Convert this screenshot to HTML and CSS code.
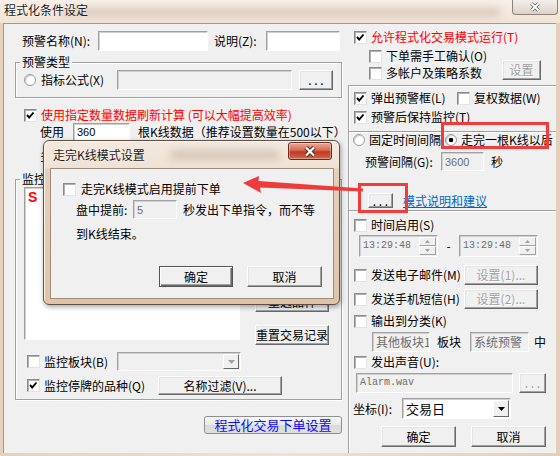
FILE: index.html
```html
<!DOCTYPE html>
<html>
<head>
	<meta charset="utf-8">
	<title>程式化条件设定</title>
	<link rel="stylesheet" href="styles.css">
</head>
<body>
<div class="win">
	<div class="titlebar">
		<span class="title">程式化条件设定</span>
		<span class="haze"></span>
		<div class="wclose">
			<svg width="12" height="10" viewBox="0 0 12 10"><path d="M2.5 1.5l7 7M9.5 1.5l-7 7" stroke="#706862" stroke-width="3.6"/><path d="M2.5 1.5l7 7M9.5 1.5l-7 7" stroke="#fff" stroke-width="1.8"/></svg>
		</div>
	</div>

	<div class="client">
		<!-- left column -->
		<div class="lcol">
			<div class="row h20">
				<span class="lbl ml19 w76">预警名称(N):</span>
				<span class="tb w110"></span>
				<span class="lbl ml6 w52">说明(Z):</span>
				<span class="tb w74"></span>
			</div>

			<fieldset class="gb gb-type">
				<legend>预警类型</legend>
				<div class="row h20 mt1">
					<span class="rd ml8"></span>
					<span class="lbl ml5 w76">指标公式(X)</span>
					<span class="tb dis w175"></span>
					<span class="btn ml7 w34">. . .</span>
				</div>
			</fieldset>

			<div class="row h14 mt10">
				<span class="cb ml21"><svg width="11" height="11" viewBox="0 0 11 11"><polyline points="2,5 4.2,7.5 8.5,2.5" fill="none" stroke="#000" stroke-width="1.9"/></svg></span>
				<span class="lbl ml4 red">使用指定数量数据刷新计算 (可以大幅提高效率)</span>
			</div>
			<div class="row h18 mt1">
				<span class="lbl ml37 w33">使用</span>
				<span class="tb num w57">360</span>
				<span class="lbl ml8">根K线数据（推荐设置数量在500以下）</span>
			</div>
			<div class="row h14 mt8">
				<span class="lbl ml37">多</span>
			</div>

			<fieldset class="gb gb-mon">
				<legend>监控品种</legend>
				<div class="row mon-body">
					<div class="lst"><b class="s">S</b></div>
					<div class="side-btns">
						<span class="btn w74">重选品种</span>
						<span class="btn w74">重置交易记录</span>
					</div>
				</div>
				<div class="row h19 mt7">
					<span class="cb ml11"></span>
					<span class="lbl ml4 w73">监控板块(B)</span>
					<span class="combo dis w124"><span class="cbtn"><svg width="7" height="4" viewBox="0 0 7 4"><path d="M0 0h7L3.5 4z" fill="#a0a0a0"/></svg></span></span>
				</div>
				<div class="row h19 mt5">
					<span class="cb ml11"><svg width="11" height="11" viewBox="0 0 11 11"><polyline points="2,5 4.2,7.5 8.5,2.5" fill="none" stroke="#000" stroke-width="1.9"/></svg></span>
					<span class="lbl ml4 w114">监控停牌的品种(Q)</span>
					<span class="btn w124 h19">名称过滤(V)...</span>
				</div>
			</fieldset>

			<span class="btn-theme">程式化交易下单设置</span>
		</div>

		<!-- right column -->
		<div class="rcol">
			<div class="row h14">
				<span class="cb ml6"><svg width="11" height="11" viewBox="0 0 11 11"><polyline points="2,5 4.2,7.5 8.5,2.5" fill="none" stroke="#000" stroke-width="1.9"/></svg></span>
				<span class="lbl ml4 red">允许程式化交易模式运行(T)</span>
			</div>
			<div class="bc mt5">
				<div>
					<div class="row h14">
						<span class="cb ml21"></span>
						<span class="lbl ml4">下单需手工确认(O)</span>
					</div>
					<div class="row h14 mt3">
						<span class="cb ml21"></span>
						<span class="lbl ml4">多帐户及策略系数</span>
					</div>
				</div>
				<span class="btn dis w39 bc-btn">设置</span>
			</div>

			<div class="rpanel">
				<div class="row h14 mt5">
					<span class="cb ml5"><svg width="11" height="11" viewBox="0 0 11 11"><polyline points="2,5 4.2,7.5 8.5,2.5" fill="none" stroke="#000" stroke-width="1.9"/></svg></span>
					<span class="lbl ml4 w86">弹出预警框(L)</span>
					<span class="cb"></span>
					<span class="lbl ml4">复权数据(W)</span>
				</div>
				<div class="row h14 mt5">
					<span class="cb ml5"><svg width="11" height="11" viewBox="0 0 11 11"><polyline points="2,5 4.2,7.5 8.5,2.5" fill="none" stroke="#000" stroke-width="1.9"/></svg></span>
					<span class="lbl ml4">预警后保持监控(T)</span>
				</div>
				<div class="sep mt7"></div>
				<div class="row h14">
					<span class="rd ml4"></span>
					<span class="lbl ml4 w76">固定时间间隔</span>
					<span class="rd on"></span>
					<span class="lbl ml4">走完一根K线以后</span>
				</div>
				<div class="row h19 mt5">
					<span class="lbl ml16 w76">预警间隔(G):</span>
					<span class="tb dis num w43">3600</span>
					<span class="lbl ml7">秒</span>
				</div>
				<div class="row h15 mt22">
					<span class="btn ml19 w25 h15">. . .</span>
					<span class="link ml10">模式说明和建议</span>
				</div>
				<div class="sep mt2"></div>
				<div class="row h14 mt6">
					<span class="cb ml5"></span>
					<span class="lbl ml4">时间启用(S)</span>
				</div>
				<div class="row h22 mt3">
					<span class="picker ml10"><span class="ptext">13:29:48</span><span class="spin"><span><svg width="5" height="3" viewBox="0 0 5 3"><path d="M2.5 0L5 3H0z" fill="#a0a0a0"/></svg></span><span><svg width="5" height="3" viewBox="0 0 5 3"><path d="M0 0h5L2.5 3z" fill="#a0a0a0"/></svg></span></span></span>
					<span class="dash">-</span>
					<span class="picker"><span class="ptext">13:29:48</span><span class="spin"><span><svg width="5" height="3" viewBox="0 0 5 3"><path d="M2.5 0L5 3H0z" fill="#a0a0a0"/></svg></span><span><svg width="5" height="3" viewBox="0 0 5 3"><path d="M0 0h5L2.5 3z" fill="#a0a0a0"/></svg></span></span></span>
				</div>
				<div class="row h20 mt8">
					<span class="cb ml5"></span>
					<span class="lbl ml4 w93">发送电子邮件(M)</span>
					<span class="btn dis w74">设置(1)...</span>
				</div>
				<div class="row h20 mt4">
					<span class="cb ml5"></span>
					<span class="lbl ml4 w93">发送手机短信(H)</span>
					<span class="btn dis w74">设置(2)...</span>
				</div>
				<div class="row h14 mt5">
					<span class="cb ml5"></span>
					<span class="lbl ml4">输出到分类(K)</span>
				</div>
				<div class="row h20 mt4">
					<span class="tb dis ml23 w58">其他板块1</span>
					<span class="lbl ml7 w33">板块</span>
					<span class="tb dis w59">系统预警</span>
					<span class="lbl ml5">中</span>
				</div>
				<div class="row h14 mt3">
					<span class="cb ml5"></span>
					<span class="lbl ml4">发出声音(U):</span>
				</div>
				<div class="row h20 mt4">
					<span class="tb dis mono ml7 w157">Alarm.wav</span>
					<span class="btn dis ml6 w27">. . .</span>
				</div>
				<div class="row h21 mt5">
					<span class="lbl ml4 w49">坐标(I):</span>
					<span class="combo w109"><span class="ctext">交易日</span><span class="cbtn"><svg width="7" height="4" viewBox="0 0 7 4"><path d="M0 0h7L3.5 4z" fill="#000"/></svg></span></span>
				</div>
				<div class="row h21 mt7">
					<span class="btn ml32 w75">确定</span>
					<span class="btn ml15 w75">取消</span>
				</div>
			</div>
		</div>
	</div>

	<!-- sub dialog on top -->
	<div class="sd">
		<div class="sd-title">
			<span class="sd-text">走完K线模式设置</span>
			<span class="haze2"></span>
			<div class="sd-close">
				<svg width="14" height="11" viewBox="0 0 14 11"><path d="M3 1.5l8 8M11 1.5l-8 8" stroke="#5a2a22" stroke-width="4.2"/><path d="M3 1.5l8 8M11 1.5l-8 8" stroke="#fff" stroke-width="2.2"/></svg>
			</div>
		</div>
		<div class="sd-body">
			<div class="row h14 mt13">
				<span class="cb ml12"></span>
				<span class="lbl ml5">走完K线模式启用提前下单</span>
			</div>
			<div class="row h19 mt4">
				<span class="lbl ml25 w57">盘中提前:</span>
				<span class="tb dis num w44">5</span>
				<span class="lbl ml6">秒发出下单指令，而不等</span>
			</div>
			<div class="row h14 mt8">
				<span class="lbl ml25">到K线结束。</span>
			</div>
			<div class="row h21 mt25">
				<span class="btn def ml108 w74">确定</span>
				<span class="btn ml14 w75">取消</span>
			</div>
		</div>
	</div>

	<!-- annotations -->
	<div class="mark mark-a"></div>
	<div class="mark mark-b"></div>
	<svg class="arrow" width="560" height="456" viewBox="0 0 560 456">
		<polygon points="243,183 259,176 258.5,181 363,188.5 363,191.5 260,187.5 261,193" fill="#ee3b3b"/>
	</svg>
</div>
</body>
</html>
```

FILE: styles.css
```css
* {
	box-sizing: border-box;
}

body {
	margin: 0;
	background: #e8d6c4;
	font-family: "Noto Sans CJK SC", "DejaVu Sans", sans-serif;
	font-size: 12px;
	line-height: 14px;
	color: #000;
}

.win {
	position: relative;
	width: 560px;
	height: 456px;
	overflow: hidden;
	background: linear-gradient(90deg, #e6d1bc, #efe1d3 50%, #e4cfba);
}

/* title bar */
.titlebar {
	position: relative;
	height: 23px;
	display: flex;
	justify-content: space-between;
	align-items: flex-start;
	background: linear-gradient(#f8efe6, #f1e3d6);
	overflow: hidden;
}

.title {
	position: relative;
	z-index: 1;
	margin: 3px 0 0 4px;
	color: #1b1b1b;
	text-shadow: 0 0 3px #fff;
}

.haze {
	position: absolute;
	left: 60px;
	right: 60px;
	top: 9px;
	height: 6px;
	background: #9c8574;
	filter: blur(4px);
	opacity: .45;
}

.wclose {
	position: relative;
	z-index: 1;
	width: 46px;
	height: 15px;
	margin-right: 2px;
	border: 1px solid #8c817a;
	border-top: none;
	border-radius: 0 0 4px 4px;
	background: linear-gradient(#f5eee9, #ddd2ca);
	display: flex;
	justify-content: center;
	align-items: center;
}

/* client area */
.client {
	display: flex;
	height: 430px;
	margin: 0 4px 0 3px;
	background: #f0f0f0;
	box-shadow: inset 1px 1px 0 #a8988a;
}

.lcol {
	width: 345px;
	padding-top: 8px;
}

.rcol {
	flex: 1;
	padding-top: 7px;
	overflow: hidden;
}

.row {
	display: flex;
	align-items: center;
}

.lbl {
	flex: none;
	white-space: nowrap;
}

.red {
	color: #f00;
}

.link {
	color: #0066cc;
	text-decoration: underline;
	white-space: nowrap;
}

/* controls */
.tb {
	flex: none;
	display: flex;
	align-items: center;
	height: 100%;
	padding: 0 3px;
	background: #fff;
	border: 1px solid;
	border-color: #a0a0a0 #fff #fff #a0a0a0;
	box-shadow: inset 1px 1px 0 #d0d0d0;
	white-space: nowrap;
	overflow: hidden;
}

.tb.dis {
	background: #f0f0f0;
	color: #6d6d6d;
}

.num {
	font-family: "Liberation Sans", sans-serif;
	font-size: 11px;
}

.mono {
	font-family: "Liberation Mono", monospace;
	font-size: 10px;
}

.btn {
	flex: none;
	display: flex;
	align-items: center;
	justify-content: center;
	height: 100%;
	background: #f0f0f0;
	border: 1px solid;
	border-color: #fff #696969 #696969 #fff;
	box-shadow: inset -1px -1px 0 #a0a0a0, inset 1px 1px 0 #e3e3e3;
	white-space: nowrap;
}

.btn.dis {
	color: #a0a0a0;
	text-shadow: 1px 1px 0 #fff;
}

.btn.def {
	border-color: #555;
	box-shadow: inset 1px 1px 0 #fff, inset -1px -1px 0 #696969, inset -2px -2px 0 #a0a0a0;
}

.btn-theme {
	display: flex;
	align-items: center;
	justify-content: center;
	width: 138px;
	height: 18px;
	margin: 16px 0 0 201px;
	border: 1px solid #8e8f8f;
	border-radius: 3px;
	background: linear-gradient(#f8f8f8, #e8e8e8 50%, #d9d9d9 51%, #e0e0e0);
	color: #0a0aff;
	font-size: 13px;
}

.cb {
	flex: none;
	display: flex;
	width: 13px;
	height: 13px;
	background: #fff;
	border: 1px solid;
	border-color: #8a8a8a #e3e3e3 #e3e3e3 #8a8a8a;
	box-shadow: inset 1px 1px 0 #b0b0b0;
}

.rd {
	flex: none;
	width: 12px;
	height: 12px;
	border-radius: 50%;
	background: #fff;
	border: 1px solid #9a9a9a;
	box-shadow: inset 1px 1px 1px #c8c8c8;
}

.rd.on {
	background: radial-gradient(circle, #000 0, #000 2px, #fff 2.6px);
}

.combo {
	flex: none;
	display: flex;
	height: 100%;
	background: #fff;
	border: 1px solid;
	border-color: #a0a0a0 #fff #fff #a0a0a0;
	box-shadow: inset 1px 1px 0 #d0d0d0;
}

.combo.dis {
	background: #f0f0f0;
}

.ctext {
	padding: 1px 3px 0;
	font-size: 13px;
	display: flex;
	align-items: center;
}

.cbtn {
	display: flex;
	align-items: center;
	justify-content: center;
	width: 16px;
	margin: 1px 1px 1px auto;
	background: #f0f0f0;
	border: 1px solid;
	border-color: #fff #696969 #696969 #fff;
}

.picker {
	flex: none;
	display: flex;
	width: 79px;
	height: 100%;
	background: #f0f0f0;
	border: 1px solid;
	border-color: #a0a0a0 #fff #fff #a0a0a0;
	box-shadow: inset 1px 1px 0 #d0d0d0;
}

.ptext {
	flex: 1;
	display: flex;
	align-items: center;
	padding-left: 3px;
	color: #6d6d6d;
	font-family: "Liberation Mono", monospace;
	font-size: 10px;
}

.spin {
	display: flex;
	flex-direction: column;
	width: 17px;
	margin: 1px;
}

.spin span {
	flex: 1;
	display: flex;
	align-items: center;
	justify-content: center;
	background: #f0f0f0;
	border: 1px solid;
	border-color: #fff #a0a0a0 #a0a0a0 #fff;
}

.dash {
	width: 21px;
	text-align: center;
}

/* group boxes */
.gb {
	margin: 0 0 0 12px;
	padding: 0;
	width: 327px;
	min-width: 0;
	border: 1px solid #a0a0a0;
	box-shadow: 1px 1px 0 #fff, inset 1px 1px 0 #fff;
}

.gb legend {
	margin-left: 4px;
	padding: 0 2px;
	background: #f0f0f0;
	line-height: 14px;
}

.gb-type {
	margin-top: 4px;
	padding-bottom: 7px;
}

.gb-mon {
	margin-top: 9px;
	padding-bottom: 4px;
}

.mon-body {
	align-items: flex-start;
	margin-top: 1px;
}

.lst {
	width: 216px;
	height: 153px;
	margin-left: 8px;
	padding: 2px 3px;
	background: #fff;
	border: 1px solid;
	border-color: #a0a0a0 #fff #fff #a0a0a0;
	box-shadow: inset 1px 1px 0 #d0d0d0;
}

.s {
	color: #f00;
	font-family: "Liberation Sans", sans-serif;
	font-size: 14px;
}

.side-btns {
	display: flex;
	flex-direction: column;
	justify-content: flex-end;
	gap: 13px;
	height: 158px;
	margin-left: 15px;
}

.side-btns .btn {
	height: 20px;
}

/* right column */
.bc {
	display: flex;
}

.bc-btn {
	height: 20px;
	margin: auto 15px 0 auto;
}

.rpanel {
	margin-top: 5px;
	border-top: 1px solid #a0a0a0;
	border-left: 1px solid #a0a0a0;
	box-shadow: inset 1px 1px 0 #fff;
	padding-bottom: 10px;
}

.sep {
	height: 2px;
	border-top: 1px solid #a0a0a0;
	border-bottom: 1px solid #fff;
}

/* sub dialog */
.sd {
	position: absolute;
	left: 43px;
	top: 140px;
	width: 297px;
	height: 165px;
	padding: 0 5px 5px 6px;
	border: 1px solid #5e5046;
	border-radius: 6px;
	background: linear-gradient(#f4e9df 0, #efe2d5 27px, #e6d0bb 28px, #dfc4a8 100%);
	box-shadow: 1px 2px 5px rgba(0, 0, 0, .35), inset 1px 1px 0 #fbf4ee;
}

.sd-title {
	position: relative;
	display: flex;
	justify-content: space-between;
	align-items: flex-start;
	height: 27px;
}

.sd-text {
	position: relative;
	z-index: 1;
	margin: 7px 0 0 3px;
	text-shadow: 0 0 3px #fff;
	color: #1b1b1b;
}

.haze2 {
	position: absolute;
	left: 120px;
	right: 55px;
	top: 10px;
	height: 8px;
	background: #9c8574;
	filter: blur(4px);
	opacity: .4;
}

.sd-close {
	position: relative;
	z-index: 1;
	display: flex;
	align-items: center;
	justify-content: center;
	width: 44px;
	height: 18px;
	margin: 1px 2px 0 0;
	border: 1px solid #6b2a20;
	border-radius: 3px;
	background: linear-gradient(#eaa999 0, #d86a55 45%, #c13a22 55%, #d0664e 100%);
	box-shadow: inset 0 0 0 1px rgba(255, 255, 255, .35);
}

.sd-body {
	height: 131px;
	background: #f0f0f0;
	border: 1px solid #9d8b7b;
}

/* annotations */
.mark {
	position: absolute;
	border: 3px solid #f23c3c;
}

.mark-a {
	left: 441px;
	top: 122px;
	width: 108px;
	height: 27px;
}

.mark-b {
	left: 358px;
	top: 183px;
	width: 50px;
	height: 30px;
}

.arrow {
	position: absolute;
	left: 0;
	top: 0;
	pointer-events: none;
}

/* spacing helpers */
.h14 { height: 14px; }
.h15 { height: 15px; }
.h18 { height: 18px; }
.h19 { height: 19px; }
.h20 { height: 20px; }
.h21 { height: 21px; }
.h22 { height: 22px; }

.mt1 { margin-top: 1px; }
.mt2 { margin-top: 2px; }
.mt3 { margin-top: 3px; }
.mt4 { margin-top: 4px; }
.mt5 { margin-top: 5px; }
.mt6 { margin-top: 6px; }
.mt7 { margin-top: 7px; }
.mt8 { margin-top: 8px; }
.mt10 { margin-top: 10px; }
.mt13 { margin-top: 13px; }
.mt22 { margin-top: 22px; }
.mt25 { margin-top: 25px; }

.ml4 { margin-left: 4px; }
.ml5 { margin-left: 5px; }
.ml6 { margin-left: 6px; }
.ml7 { margin-left: 7px; }
.ml8 { margin-left: 8px; }
.ml10 { margin-left: 10px; }
.ml11 { margin-left: 11px; }
.ml12 { margin-left: 12px; }
.ml14 { margin-left: 14px; }
.ml15 { margin-left: 15px; }
.ml16 { margin-left: 16px; }
.ml19 { margin-left: 19px; }
.ml21 { margin-left: 21px; }
.ml23 { margin-left: 23px; }
.ml25 { margin-left: 25px; }
.ml32 { margin-left: 32px; }
.ml37 { margin-left: 37px; }
.ml108 { margin-left: 108px; }

.w25 { width: 25px; }
.w27 { width: 27px; }
.w33 { width: 33px; }
.w34 { width: 34px; }
.w39 { width: 39px; }
.w43 { width: 43px; }
.w44 { width: 44px; }
.w49 { width: 49px; }
.w52 { width: 52px; }
.w57 { width: 57px; }
.w58 { width: 58px; }
.w59 { width: 59px; }
.w73 { width: 73px; }
.w74 { width: 74px; }
.w75 { width: 75px; }
.w76 { width: 76px; }
.w86 { width: 86px; }
.w93 { width: 93px; }
.w109 { width: 109px; }
.w110 { width: 110px; }
.w114 { width: 114px; }
.w124 { width: 124px; }
.w157 { width: 157px; }
.w175 { width: 175px; }
```
